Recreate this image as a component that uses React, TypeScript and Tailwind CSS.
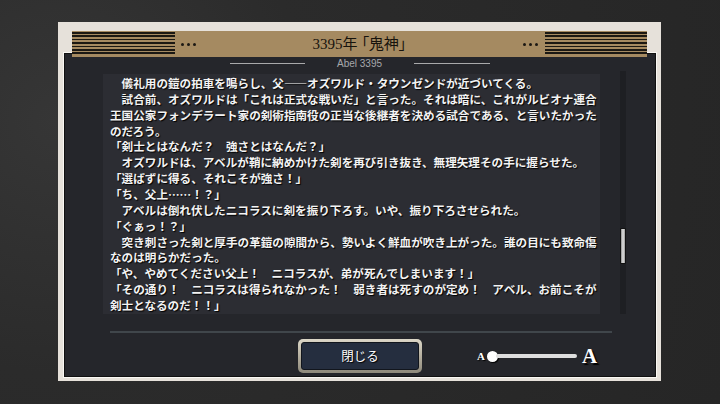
import React from 'react';

const paragraphs = [
  '　儀礼用の鎧の拍車を鳴らし、父――オズワルド・タウンゼンドが近づいてくる。',
  '　試合前、オズワルドは「これは正式な戦いだ」と言った。それは暗に、これがルビオナ連合王国公家フォンデラート家の剣術指南役の正当な後継者を決める試合である、と言いたかったのだろう。',
  '「剣士とはなんだ？　強さとはなんだ？」',
  '　オズワルドは、アベルが鞘に納めかけた剣を再び引き抜き、無理矢理その手に握らせた。',
  '「選ばずに得る、それこそが強さ！」',
  '「ち、父上……！？」',
  '　アベルは倒れ伏したニコラスに剣を振り下ろす。いや、振り下ろさせられた。',
  '「ぐぁっ！？」',
  '　突き刺さった剣と厚手の革鎧の隙間から、勢いよく鮮血が吹き上がった。誰の目にも致命傷なのは明らかだった。',
  '「や、やめてください父上！　ニコラスが、弟が死んでしまいます！」',
  '「その通り！　ニコラスは得られなかった！　弱き者は死すのが定め！　アベル、お前こそが剣士となるのだ！！」',
];

const Stripes = ({ w }: { w: string }) => (
  <div
    className={`${w} h-[24px] bg-[repeating-linear-gradient(to_bottom,#1b1813_0px,#1b1813_1.6px,transparent_1.6px,transparent_3.4px)]`}
  />
);

const Dots = () => (
  <div className="flex gap-[3px]">
    <div className="w-[3px] h-[3px] rounded-full bg-[#1b1813]" />
    <div className="w-[3px] h-[3px] rounded-full bg-[#1b1813]" />
    <div className="w-[3px] h-[3px] rounded-full bg-[#1b1813]" />
  </div>
);

const App = () => {
  return (
    <div className="w-[720px] h-[404px] overflow-hidden bg-[#2b2b2b] bg-[radial-gradient(circle_at_8%_30%,#363636_0%,#2b2b2b_35%,#262626_100%)] pt-[22px] pl-[58px] font-['Noto_Sans_CJK_JP',sans-serif]">
      <div className="w-[603px] h-[359px] bg-[#e6e1da] pt-[9px] flex flex-col">
        {/* title bar */}
        <div className="relative z-10 mx-[14px] h-[26px] bg-[#a58a61] flex items-center">
          <Stripes w="w-[103px]" />
          <div className="ml-[6px]">
            <Dots />
          </div>
          <div className="flex-1 text-center text-[15px] leading-none text-[#17130d] font-['Liberation_Serif','Noto_Sans_CJK_JP',serif] [font-feature-settings:'palt']">
            3395年 「鬼神」
          </div>
          <div className="mr-[7px]">
            <Dots />
          </div>
          <Stripes w="w-[102px]" />
        </div>

        {/* dark panel */}
        <div className="-mt-[4px] ml-[6px] mr-[5px] mb-[4px] flex-1 bg-[#25262b] border border-[#111] ring-1 ring-[#faf8f4] flex flex-col">
          <div className="pt-[4px] h-[15px] flex items-center justify-center gap-[32px]">
            <div className="w-[75px] h-px bg-[#a9a9ab]" />
            <div className="text-[10px] leading-none text-[#a7a8ab] font-['Liberation_Sans',sans-serif]">Abel 3395</div>
            <div className="w-[76px] h-px bg-[#a9a9ab]" />
          </div>

          <div className="mt-[2px] flex pl-[38px]">
            <div className="mt-[3px] w-[497px] h-[240px] bg-[#2c2d33] pl-[7px] pt-[2px] overflow-hidden">
              <div className="w-[489px] text-[11.6px] leading-[15.86px] font-bold text-[#f3f3f3] [text-shadow:1px_1px_1px_#000]">
                {paragraphs.map((p, i) => (
                  <p key={i}>{p}</p>
                ))}
              </div>
            </div>
            <div className="ml-[20px] w-[6px] h-[243px] bg-[#1e1f23]">
              <div className="mt-[157px] h-[36px] w-[6px] bg-linear-to-r from-[#8f8f8f] via-[#e2e2e2] to-[#9a9a9a] border border-[#111] rounded-[1px]" />
            </div>
          </div>

          <div className="mt-[17px] ml-[45px] w-[502px] h-[2px] bg-[#40464b]" />

          <div className="mt-[6px] flex items-center pl-[233px]">
            <div className="w-[124px] h-[34px] rounded-[5px] p-[3px] bg-linear-to-b from-[#dcd7c8] via-[#b6b0a0] to-[#8e897b]">
              <div className="w-full h-full rounded-[3px] bg-[#252e3f] border border-[#12161d] flex items-center justify-center text-[12.5px] text-white [text-shadow:1px_1px_1px_#000]">
                閉じる
              </div>
            </div>

            <div className="ml-[55px] flex items-center">
              <span className="text-[11px] leading-none font-bold text-white font-['Liberation_Serif',serif] [text-shadow:1px_1px_1px_#000]">A</span>
              <div className="ml-[2px] w-[11px] h-[11px] rounded-full bg-white shadow-[1px_1px_1px_#000]" />
              <div className="-ml-[2px] w-[81px] h-[4px] rounded-full bg-[#dedede]" />
              <span className="ml-[5px] text-[21px] leading-none font-bold text-white font-['Liberation_Serif',serif] [text-shadow:2px_2px_1px_#000]">A</span>
            </div>
          </div>
        </div>
      </div>
    </div>
  );
};

export default App;
